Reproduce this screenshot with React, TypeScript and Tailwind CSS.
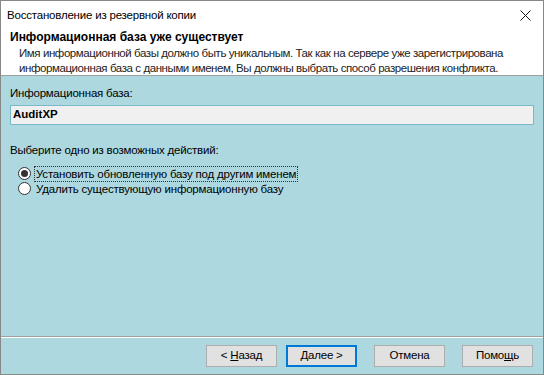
import React from "react";

const font = { fontFamily: '"Liberation Sans", Arial, sans-serif' };

function Btn({ children, primary }: { children: React.ReactNode; primary?: boolean }) {
    return (
        <button
            type="button"
            className={
                primary
                    ? "w-[71px] h-[22px] bg-[#e1e1e1] border-2 border-[#0078d7] text-[11.5px] tracking-[-0.2px] text-black leading-none"
                    : "w-[71px] h-[22px] bg-[#e1e1e1] border border-[#adadad] text-[11.5px] tracking-[-0.2px] text-black leading-none"
            }
        >
            {children}
        </button>
    );
}

export default function App() {
    return (
        <div
            className="w-[544px] h-[375px] bg-white border border-[#888888] flex flex-col text-black text-[11.5px] tracking-[-0.2px]"
            style={font}
        >
            {/* title bar */}
            <div className="h-[29px] flex items-center justify-between pl-[6px] pr-[12px]">
                <span>Восстановление из резервной копии</span>
                <svg width="11" height="11" viewBox="0 0 11 11">
                    <path d="M0.5 0.5 L10.5 10.5 M10.5 0.5 L0.5 10.5" stroke="#111" strokeWidth="1" />
                </svg>
            </div>

            {/* header */}
            <div className="h-[46px] pl-[9px] flex flex-col border-b border-[#a0a0a0]">
                <div className="text-[12px] font-bold leading-[15px] tracking-normal">Информационная база уже существует</div>
                <div className="pl-[9px] leading-[15px] text-[#222] mt-[1px] whitespace-nowrap tracking-[-0.42px]">
                    Имя информационной базы должно быть уникальным. Так как на сервере уже зарегистрирована
                    <br />
                    информационная база с данными именем, Вы должны выбрать способ разрешения конфликта.
                </div>
            </div>

            {/* body */}
            <div className="flex-1 bg-[#add8e0] flex flex-col">
                <div className="flex-1 px-[9px] pt-[10px]">
                    <div className="leading-[15px]">Информационная база:</div>
                    <div className="mt-[4px] h-[20px] border border-[#7ab8cc] bg-[#f0f0f0] flex items-center pl-[2px]">
                        <span className="text-[11.5px] font-bold tracking-normal">AuditXP</span>
                    </div>
                    <div className="mt-[18px] leading-[15px]">Выберите одно из возможных действий:</div>
                    <div className="mt-[8px] pl-[8px] flex flex-col">
                        <label className="flex items-center gap-[3px] h-[15px]">
                            <span className="w-[13px] h-[13px] rounded-full border border-[#333] bg-white flex items-center justify-center">
                                <span className="w-[7px] h-[7px] rounded-full bg-[#333]" />
                            </span>
                            <span className="leading-[14px] border border-dotted border-[#333] px-[1px]">
                                Установить обновленную базу под другим именем
                            </span>
                        </label>
                        <label className="flex items-center gap-[3px] h-[15px]">
                            <span className="w-[13px] h-[13px] rounded-full border border-[#333] bg-white" />
                            <span className="leading-[14px] px-[2px]">Удалить существующую информационную базу</span>
                        </label>
                    </div>
                </div>

                {/* footer */}
                <div className="border-t border-[#a0a0a0] shadow-[inset_0_1px_0_#ffffff] h-[38px] flex items-center justify-end pr-[10px]">
                    <div className="flex items-center">
                        <Btn>
                            &lt; <u>Н</u>азад
                        </Btn>
                        <div className="w-[9px]" />
                        <Btn primary>
                            <u>Д</u>алее &gt;
                        </Btn>
                        <div className="w-[17px]" />
                        <Btn>Отмена</Btn>
                        <div className="w-[17px]" />
                        <Btn>
                            Помо<u>щ</u>ь
                        </Btn>
                    </div>
                </div>
            </div>
        </div>
    );
}
